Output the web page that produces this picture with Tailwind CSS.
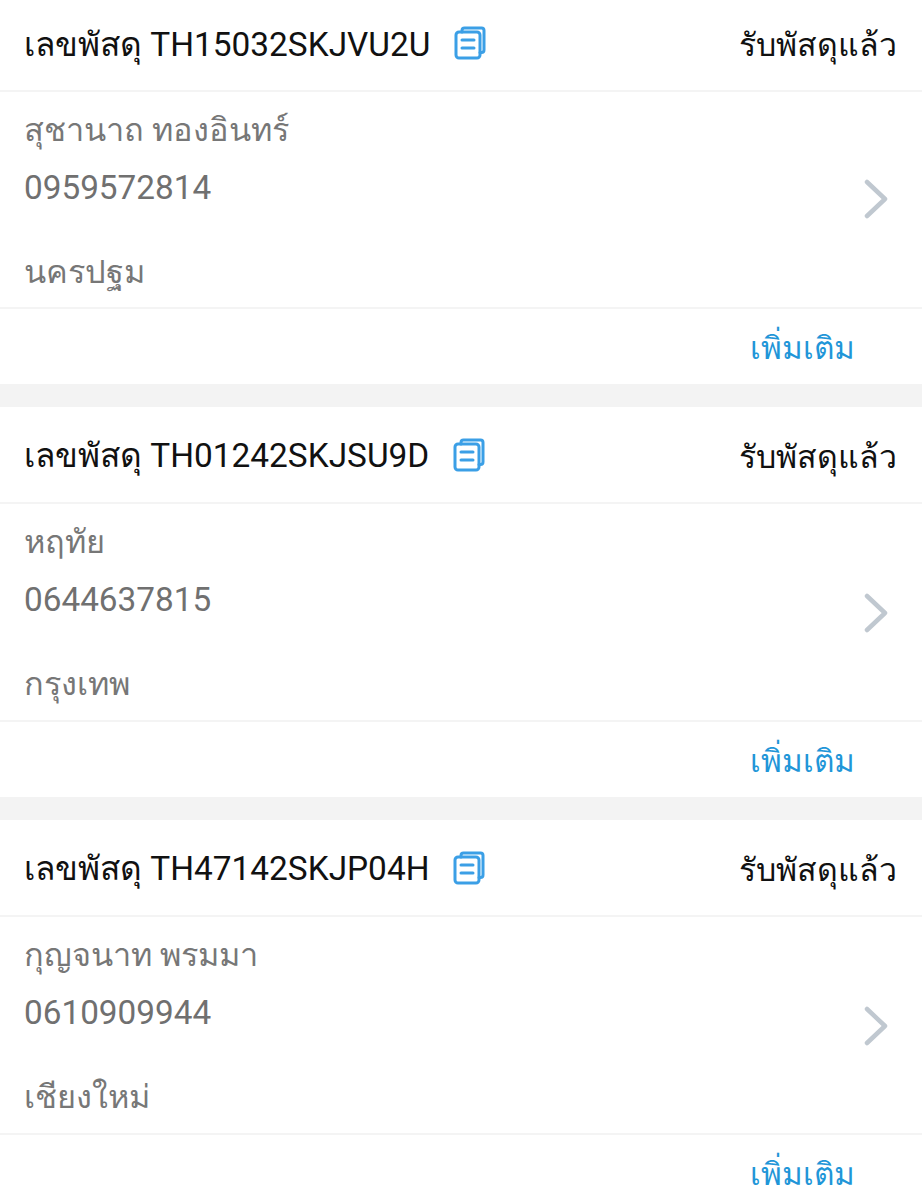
<!DOCTYPE html>
<html lang="th">
<head>
  <meta charset="UTF-8" />
  <title>Parcels</title>
  <script src="https://cdn.jsdelivr.net/npm/@tailwindcss/browser@4"></script>
</head>
<body class="bg-white font-[Roboto,'Noto_Sans',sans-serif] overflow-hidden h-[1200px]">
  <!-- Card 1 -->
  <section class="bg-white">
    <div class="h-[92px] border-b-2 border-[#f4f4f4] flex items-center justify-between pl-[24px] pr-[25px]">
      <div class="flex items-center">
        <span class="text-[33.400px] text-[#111]">เลขพัสดุ TH15032SKJVU2U</span>
        <svg class="w-[32px] h-[34px] ml-[24px] mb-[3px] text-[#3b9fe6]" viewBox="0 0 32 34" fill="none" stroke="currentColor" stroke-width="3" stroke-linejoin="round" stroke-linecap="round"><path d="M8 6V4.500A2.500 2.500 0 0 1 10.500 2H27.500A2.500 2.500 0 0 1 30 4.500V24A2.500 2.500 0 0 1 27.500 26.500H26"/><rect x="2" y="6" width="24" height="26" rx="3"/><path d="M8 14H20M8 22H20"/></svg>
      </div>
      <span class="text-[32px] text-[#111]">รับพัสดุแล้ว</span>
    </div>
    <div class="h-[217px] border-b-2 border-[#f4f4f4] flex items-center justify-between pl-[24px] pr-[34px]">
      <div class="flex flex-col text-[#777] text-[32.500px] h-full pt-[14px]">
        <span class="h-[60px] leading-[48px]">สุชานาถ ทองอินทร์</span>
        <span class="h-[84px] leading-[44px] text-[33.300px] text-[#707070]">0959572814</span>
        <span class="leading-[44px]">นครปฐม</span>
      </div>
      <svg class="w-[24px] h-[40px] mt-[-2px]" viewBox="0 0 24 40" fill="none" stroke="#c0c8d0" stroke-width="4.500" stroke-linecap="round" stroke-linejoin="round"><path d="M3 3L21 20L3 37"/></svg>
    </div>
    <div class="h-[75px] flex items-center justify-end pr-[67px] pt-[4px]">
      <span class="text-[31.500px] text-[#1f96d8]">เพิ่มเติม</span>
    </div>
  </section>
  <div class="h-[23px] bg-[#f3f3f3]"></div>
  <!-- Card 2 -->
  <section class="bg-white">
    <div class="h-[97px] border-b-2 border-[#f4f4f4] flex items-center justify-between pl-[24px] pr-[25px] pt-[4px]">
      <div class="flex items-center">
        <span class="text-[33.400px] text-[#111]">เลขพัสดุ TH01242SKJSU9D</span>
        <svg class="w-[32px] h-[34px] ml-[24px] mb-[3px] text-[#3b9fe6]" viewBox="0 0 32 34" fill="none" stroke="currentColor" stroke-width="3" stroke-linejoin="round" stroke-linecap="round"><path d="M8 6V4.500A2.500 2.500 0 0 1 10.500 2H27.500A2.500 2.500 0 0 1 30 4.500V24A2.500 2.500 0 0 1 27.500 26.500H26"/><rect x="2" y="6" width="24" height="26" rx="3"/><path d="M8 14H20M8 22H20"/></svg>
      </div>
      <span class="text-[32px] text-[#111]">รับพัสดุแล้ว</span>
    </div>
    <div class="h-[218px] border-b-2 border-[#f4f4f4] flex items-center justify-between pl-[24px] pr-[34px]">
      <div class="flex flex-col text-[#777] text-[32.500px] h-full pt-[14px]">
        <span class="h-[60px] leading-[48px]">หฤทัย</span>
        <span class="h-[84px] leading-[44px] text-[33.300px] text-[#707070]">0644637815</span>
        <span class="leading-[44px]">กรุงเทพ</span>
      </div>
      <svg class="w-[24px] h-[40px] mt-[2px]" viewBox="0 0 24 40" fill="none" stroke="#c0c8d0" stroke-width="4.500" stroke-linecap="round" stroke-linejoin="round"><path d="M3 3L21 20L3 37"/></svg>
    </div>
    <div class="h-[75px] flex items-center justify-end pr-[67px] pt-[4px]">
      <span class="text-[31.500px] text-[#1f96d8]">เพิ่มเติม</span>
    </div>
  </section>
  <div class="h-[23px] bg-[#f3f3f3]"></div>
  <!-- Card 3 -->
  <section class="bg-white">
    <div class="h-[97px] border-b-2 border-[#f4f4f4] flex items-center justify-between pl-[24px] pr-[25px] pt-[4px]">
      <div class="flex items-center">
        <span class="text-[33.400px] text-[#111]">เลขพัสดุ TH47142SKJP04H</span>
        <svg class="w-[32px] h-[34px] ml-[24px] mb-[3px] text-[#3b9fe6]" viewBox="0 0 32 34" fill="none" stroke="currentColor" stroke-width="3" stroke-linejoin="round" stroke-linecap="round"><path d="M8 6V4.500A2.500 2.500 0 0 1 10.500 2H27.500A2.500 2.500 0 0 1 30 4.500V24A2.500 2.500 0 0 1 27.500 26.500H26"/><rect x="2" y="6" width="24" height="26" rx="3"/><path d="M8 14H20M8 22H20"/></svg>
      </div>
      <span class="text-[32px] text-[#111]">รับพัสดุแล้ว</span>
    </div>
    <div class="h-[218px] border-b-2 border-[#f4f4f4] flex items-center justify-between pl-[24px] pr-[34px]">
      <div class="flex flex-col text-[#777] text-[32.500px] h-full pt-[14px]">
        <span class="h-[60px] leading-[48px]">กุญจนาท พรมมา</span>
        <span class="h-[84px] leading-[44px] text-[33.300px] text-[#707070]">0610909944</span>
        <span class="leading-[44px]">เชียงใหม่</span>
      </div>
      <svg class="w-[24px] h-[40px] mt-[2px]" viewBox="0 0 24 40" fill="none" stroke="#c0c8d0" stroke-width="4.500" stroke-linecap="round" stroke-linejoin="round"><path d="M3 3L21 20L3 37"/></svg>
    </div>
    <div class="h-[75px] flex items-center justify-end pr-[67px] pt-[4px]">
      <span class="text-[31.500px] text-[#1f96d8]">เพิ่มเติม</span>
    </div>
  </section>
</body>
</html>
